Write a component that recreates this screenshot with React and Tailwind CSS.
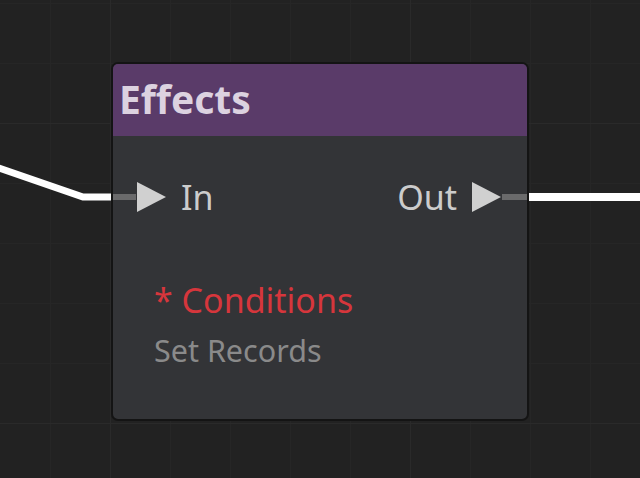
import React from 'react';

const font = { fontFamily: '"Noto Sans", "Open Sans", sans-serif' };

function PortArrow() {
  return (
    <svg width="31" height="32" viewBox="0 0 31 32" className="shrink-0">
      <path d="M1 1 L30 16 L1 31 Z" fill="#d0d0d0" />
    </svg>
  );
}

function Wires() {
  return (
    <svg className="absolute inset-0" width="640" height="478" viewBox="0 0 640 478">
      <polyline points="-4,167 83,197 112,197" fill="none" stroke="#ffffff" strokeWidth="7" />
      <line x1="528" y1="197" x2="644" y2="197" stroke="#ffffff" strokeWidth="8" />
    </svg>
  );
}

export default function App() {
  return (
    <div
      className="relative w-[640px] h-[478px] overflow-hidden bg-[#222222] bg-[linear-gradient(to_right,#2a2a2a_1px,transparent_1px),linear-gradient(to_bottom,#2a2a2a_1px,transparent_1px),linear-gradient(to_right,#262626_1px,transparent_1px),linear-gradient(to_bottom,#262626_1px,transparent_1px)] bg-[size:300px_300px,300px_300px,60px_60px,60px_60px] bg-[position:110px_123px,110px_123px,50px_63px,50px_63px]"
      style={font}
    >
      <Wires />

      {/* graph node */}
      <div className="absolute left-[111px] top-[62px] w-[418px] h-[359px] rounded-[7px] border-2 border-[#141414] bg-[#333437] overflow-hidden flex flex-col">
        <div className="h-[72px] bg-[#5a3b69] px-[6px] flex items-center">
          <span className="text-[39px] font-bold leading-none text-[#dcd2e0] -mt-[3px]">Effects</span>
        </div>

        <div className="flex flex-col pt-[41px]">
          <div className="h-[40px] flex items-center justify-between">
            <div className="flex items-center">
              <div className="w-[23px] h-[6px] bg-[#6a6a6b]" />
              <PortArrow />
              <span className="ml-[14px] text-[34px] leading-none text-[#cccccc]">In</span>
            </div>
            <div className="flex items-center">
              <span className="mr-[14px] text-[34px] leading-none text-[#cccccc]">Out</span>
              <PortArrow />
              <div className="w-[25px] h-[6px] bg-[#6a6a6b]" />
            </div>
          </div>

          <div className="flex flex-col pl-[41px] pt-[61px]">
            <span className="text-[34px] leading-[44px] text-[#d6363c]">* Conditions</span>
            <span className="mt-[8px] text-[30.5px] leading-[40px] text-[#8a8a8a]">Set Records</span>
          </div>
        </div>
      </div>
    </div>
  );
}
